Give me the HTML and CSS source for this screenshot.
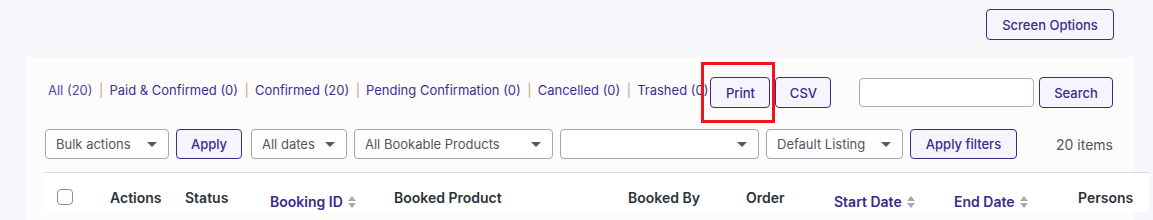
FILE: index.html
```html
<!DOCTYPE html>
<html>
<head>
<meta charset="utf-8">
<link rel="stylesheet" href="styles.css">
</head>
<body>
<div class="topbar">
  <button class="btn btn-screen">Screen Options</button>
</div>
<div class="panel">
  <div class="row1">
    <ul class="subsubsub">
      <li><a class="current">All (20)</a><span class="sep">|</span></li>
      <li><a>Paid &amp; Confirmed (0)</a><span class="sep">|</span></li>
      <li><a>Confirmed (20)</a><span class="sep">|</span></li>
      <li><a>Pending Confirmation (0)</a><span class="sep">|</span></li>
      <li><a>Cancelled (0)</a><span class="sep">|</span></li>
      <li><a>Trashed (0)</a></li>
    </ul>
    <div class="highlight-wrap">
      <button class="btn btn-print">Print</button>
      <span class="highlight"></span>
    </div>
    <button class="btn btn-csv">CSV</button>
    <div class="search">
      <input class="search-input" type="text">
      <button class="btn btn-search">Search</button>
    </div>
  </div>
  <div class="row2">
    <div class="sel w-bulk"><span>Bulk actions</span><i class="arrow"></i></div>
    <button class="btn btn-apply">Apply</button>
    <div class="sel w-dates"><span>All dates</span><i class="arrow"></i></div>
    <div class="sel w-prod"><span>All Bookable Products</span><i class="arrow"></i></div>
    <div class="sel w-prod"><span></span><i class="arrow"></i></div>
    <div class="sel w-list"><span>Default Listing</span><i class="arrow"></i></div>
    <button class="btn btn-filters">Apply filters</button>
    <div class="count">20 items</div>
  </div>
  <table class="list">
    <colgroup>
      <col class="c-cb"><col class="c-actions"><col class="c-status"><col class="c-id"><col class="c-prod"><col class="c-by"><col class="c-order"><col class="c-start"><col class="c-end"><col class="c-persons">
    </colgroup>
    <thead>
      <tr>
        <th class="cb"><span class="checkbox"></span></th>
        <th>Actions</th>
        <th>Status</th>
        <th class="sortable"><span>Booking ID</span><i class="sort"><b class="up"></b><b class="down"></b></i></th>
        <th>Booked Product</th>
        <th>Booked By</th>
        <th>Order</th>
        <th class="sortable"><span>Start Date</span><i class="sort"><b class="up"></b><b class="down"></b></i></th>
        <th class="sortable"><span>End Date</span><i class="sort"><b class="up"></b><b class="down"></b></i></th>
        <th>Persons</th>
      </tr>
    </thead>
  </table>
</div>
</body>
</html>
```
FILE: styles.css
```css
* { box-sizing: border-box; }
html, body { margin: 0; padding: 0; }
body {
  background: #f5f5fa;
  font-family: Inter, "Noto Sans", sans-serif;
  font-size: 13px;
  color: #2c3338;
  width: 1153px;
  height: 220px;
  overflow: hidden;
}
.topbar {
  display: flex;
  justify-content: flex-end;
  padding: 9px 39px 0 0;
  height: 57px;
}
.btn {
  font-family: Inter, "Noto Sans", sans-serif;
  font-size: 13px;
  font-weight: 500;
  color: #3c2a8a;
  background: #f6f4ff;
  border: 1px solid #3c2a8a;
  border-radius: 4px;
  height: 30px;
  padding: 0;
  cursor: pointer;
}
.btn-screen { width: 128px; height: 31px; }
.panel {
  margin-left: 25px;
  width: 1109px;
  background: #fcfcfc;
  padding-top: 20px;
  height: 163px;
}
.row1 {
  display: flex;
  align-items: center;
  height: 31px;
  padding-right: 21px;
}
.subsubsub {
  list-style: none;
  margin: 0 0 5px 0;
  padding: 0 0 0 23px;
  display: flex;
  white-space: nowrap;
}
.subsubsub li { display: flex; }
.subsubsub a { color: #3f2f90; }
.subsubsub a.current { color: #4f4a9c; }
.sep { color: #c9a27a; padding: 0 6px 0 6.5px; }
.highlight-wrap {
  position: relative;
  margin-left: 2px;
  display: flex;
}
.btn-print { width: 60px; height: 31px; }
.highlight {
  position: absolute;
  left: -9px;
  right: -5px;
  top: -15px;
  bottom: -15px;
  border: 3px solid #f2131d;
  pointer-events: none;
}
.btn-csv { width: 56px; height: 31px; margin-left: 5px; }
.search {
  margin-left: auto;
  display: flex;
  align-items: center;
  gap: 5px;
}
.search-input {
  width: 175px;
  height: 29px;
  border: 1px solid #adadad;
  border-radius: 4px;
  background: #fff;
}
.btn-search { width: 74px; height: 31px; }
.row2 {
  display: flex;
  align-items: center;
  margin-top: 21px;
  padding-left: 20px;
  height: 30px;
}
.sel {
  height: 30px;
  border: 1px solid #a3a6aa;
  border-radius: 4px;
  background: #fff;
  display: flex;
  align-items: center;
  justify-content: space-between;
  padding: 0 11px 0 10px;
  color: #50575e;
  font-size: 13px;
  margin-right: 7px;
}
.arrow {
  width: 0;
  height: 0;
  border-left: 5px solid transparent;
  border-right: 5px solid transparent;
  border-top: 5px solid #50575e;
  margin-top: 1px;
}
.w-bulk { width: 124px; }
.w-dates { width: 96px; }
.w-prod { width: 199px; }
.w-list { width: 137px; }
.btn-apply { width: 66px; margin-right: 9px; }
.btn-filters { width: 107px; }
.count {
  margin-left: auto;
  margin-right: 21px;
  color: #50575e;
  font-size: 14px;
}
.list {
  margin-top: 13px;
  margin-left: 20px;
  width: 1104px;
  border-collapse: collapse;
  table-layout: fixed;
  background: #fff;
  border-top: 1px solid #dcdcde;
}
.c-cb { width: 55px; }
.c-actions { width: 75px; }
.c-status { width: 85px; }
.c-id { width: 124px; }
.c-prod { width: 234px; }
.c-by { width: 118px; }
.c-order { width: 88px; }
.c-start { width: 120px; }
.c-end { width: 124px; }
.c-persons { width: 81px; }
.list th {
  text-align: left;
  vertical-align: top;
  font-size: 14px;
  font-weight: 600;
  line-height: 20px;
  color: #2c3338;
  padding: 15px 0 0 10px;
  white-space: nowrap;
}
.list th.cb { padding: 16px 0 0 12px; }
.checkbox {
  display: block;
  width: 16px;
  height: 16px;
  border: 1px solid #8c8f94;
  border-radius: 4px;
  background: #fff;
}
.list th.sortable {
  padding-top: 19px;
  color: #3c2a8a;
}
.list th.sortable span { vertical-align: top; }
.sort {
  display: inline-flex;
  flex-direction: column;
  gap: 2px;
  margin-left: 5px;
  vertical-align: top;
  margin-top: 4px;
}
.sort b { display: block; width: 0; height: 0; border-left: 4px solid transparent; border-right: 4px solid transparent; }
.sort .up { border-bottom: 5px solid #a7aaad; }
.sort .down { border-top: 5px solid #a7aaad; }
```
